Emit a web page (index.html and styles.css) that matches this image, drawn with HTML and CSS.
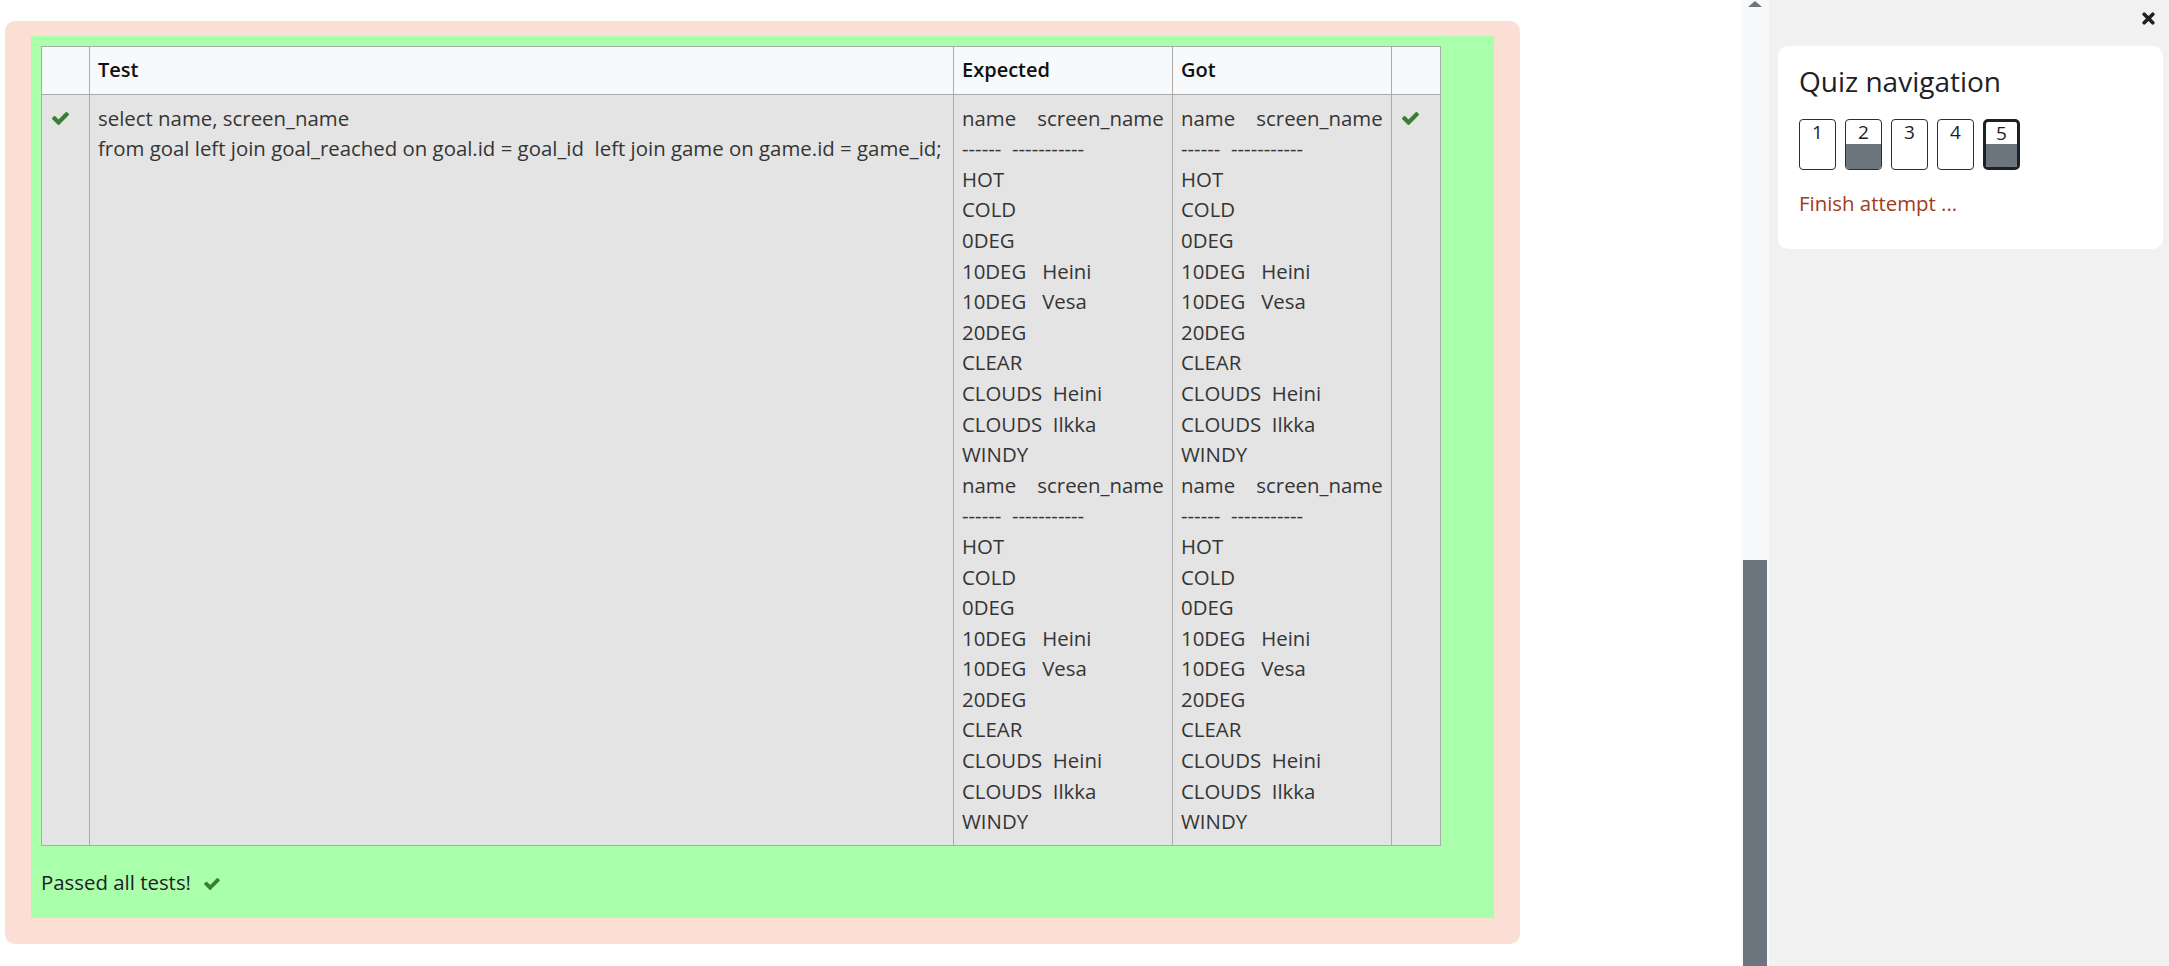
FILE: index.html
```html
<!DOCTYPE html>
<html lang="en">
<head>
<meta charset="utf-8">
<title>Quiz</title>
<link rel="stylesheet" href="styles.css">
</head>
<body>
<div class="page">
  <main class="main">
    <div class="que">
      <div class="results">
        <table class="tests">
          <colgroup>
            <col class="c-mark"><col class="c-test"><col class="c-exp"><col class="c-got"><col class="c-mark2">
          </colgroup>
          <thead>
            <tr><th></th><th>Test</th><th>Expected</th><th>Got</th><th></th></tr>
          </thead>
          <tbody>
            <tr>
              <td class="mark"><svg class="tick" viewBox="121 334 1550 1188" width="17" height="13" aria-hidden="true"><path d="M1671 566q0 40-28 68l-724 724-136 136q-28 28-68 28t-68-28l-136-136-362-362q-28-28-28-68t28-68l136-136q28-28 68-28t68 28l294 295 656-657q28-28 68-28t68 28l136 136q28 28 28 68z"/></svg></td>
              <td class="pre">select name, screen_name
from goal left join goal_reached on goal.id = goal_id  left join game on game.id = game_id;</td>
              <td class="pre">name    screen_name
------  -----------
HOT
COLD
0DEG
10DEG   Heini
10DEG   Vesa
20DEG
CLEAR
CLOUDS  Heini
CLOUDS  Ilkka
WINDY
name    screen_name
------  -----------
HOT
COLD
0DEG
10DEG   Heini
10DEG   Vesa
20DEG
CLEAR
CLOUDS  Heini
CLOUDS  Ilkka
WINDY</td>
              <td class="pre">name    screen_name
------  -----------
HOT
COLD
0DEG
10DEG   Heini
10DEG   Vesa
20DEG
CLEAR
CLOUDS  Heini
CLOUDS  Ilkka
WINDY
name    screen_name
------  -----------
HOT
COLD
0DEG
10DEG   Heini
10DEG   Vesa
20DEG
CLEAR
CLOUDS  Heini
CLOUDS  Ilkka
WINDY</td>
              <td class="mark"><svg class="tick" viewBox="121 334 1550 1188" width="17" height="13" aria-hidden="true"><path d="M1671 566q0 40-28 68l-724 724-136 136q-28 28-68 28t-68-28l-136-136-362-362q-28-28-28-68t28-68l136-136q28-28 68-28t68 28l294 295 656-657q28-28 68-28t68 28l136 136q28 28 28 68z"/></svg></td>
            </tr>
          </tbody>
        </table>
        <p class="passed">Passed all tests! <svg class="tick small" viewBox="121 334 1550 1188" width="16" height="12" aria-hidden="true"><path d="M1671 566q0 40-28 68l-724 724-136 136q-28 28-68 28t-68-28l-136-136-362-362q-28-28-28-68t28-68l136-136q28-28 68-28t68 28l294 295 656-657q28-28 68-28t68 28l136 136q28 28 28 68z"/></svg></p>
      </div>
    </div>
  </main>

  <div class="scroll">
    <span class="arrow"></span>
    <span class="thumb"></span>
  </div>

  <aside class="drawer">
    <div class="drawer-head">
      <svg class="close" viewBox="0 0 13 13" width="13" height="13" aria-hidden="true"><path d="M2.2 2.2 L10.8 10.8 M10.8 2.2 L2.2 10.8"/></svg>
    </div>
    <section class="card">
      <h3 class="card-title">Quiz navigation</h3>
      <div class="qnbuttons">
        <span class="qnbutton"><span class="num">1</span><span class="fill"></span></span>
        <span class="qnbutton answered"><span class="num">2</span><span class="fill"></span></span>
        <span class="qnbutton"><span class="num">3</span><span class="fill"></span></span>
        <span class="qnbutton"><span class="num">4</span><span class="fill"></span></span>
        <span class="qnbutton answered current"><span class="num">5</span><span class="fill"></span></span>
      </div>
      <div class="finish">Finish attempt ...</div>
    </section>
  </aside>
</div>
</body>
</html>
```

FILE: styles.css
```css
html, body {
  margin: 0;
  padding: 0;
}

body {
  font-family: "Open Sans", "Noto Sans", sans-serif;
  font-size: 20.4px;
  color: #333;
  background: #fff;
  overflow: hidden;
}

.page {
  display: flex;
  height: 966px;
}

.main {
  flex: 1;
  min-width: 0;
  background: #fff;
}

.que {
  margin: 21px 0 0 5px;
  width: 1515px;
  box-sizing: border-box;
  padding: 15px 26px 26px 26px;
  background: #fbded4;
  border-radius: 10px;
}

.results {
  background: #aaffaa;
  padding: 10px;
}

.tests {
  border-collapse: collapse;
  table-layout: fixed;
  width: 1399px;
  line-height: 30.6px;
}

.c-mark { width: 48px; }
.c-test { width: 864px; }
.c-exp { width: 219px; }
.c-got { width: 219px; }
.c-mark2 { width: 49px; }

.tests th,
.tests td {
  border: 1px solid #ababab;
  padding: 8px;
  text-align: left;
  vertical-align: top;
}

.tests th {
  background: #f8f9fa;
  color: #111;
  font-weight: 600;
  font-size: 20px;
}

.tests td {
  background: #e4e4e4;
  color: #353535;
}

.tests td.pre {
  white-space: pre;
  overflow: hidden;
}

.tests td.mark {
  padding-left: 10px;
}

.tick {
  fill: #3a7d34;
  vertical-align: 1px;
}

.tick.small {
  vertical-align: 0;
  margin-left: 8px;
}

.passed {
  margin: 20.7px 0 10.7px;
  line-height: 30.6px;
  color: #1d2125;
}

.scroll {
  flex: 0 0 28px;
  background: #f8f9fa;
  display: flex;
  flex-direction: column;
  align-items: center;
}

.arrow {
  display: block;
  width: 0;
  height: 0;
  margin-top: 1px;
  border-left: 7px solid transparent;
  border-right: 7px solid transparent;
  border-bottom: 6px solid #6c757d;
}

.thumb {
  display: block;
  margin-top: auto;
  width: 24px;
  height: 406px;
  background: #6c757d;
}

.drawer {
  flex: 0 0 400px;
  background: #f1f1f1;
}

.drawer-head {
  height: 46px;
  box-sizing: border-box;
  display: flex;
  justify-content: flex-end;
  align-items: flex-start;
  padding: 12px 14px 0 0;
}

.close {
  stroke: #1d2125;
  stroke-width: 3.6;
  stroke-linecap: round;
  fill: none;
}

.card {
  margin: 0 6px 0 9px;
  background: #fff;
  border-radius: 10px;
  padding: 19px 21px 31px;
}

.card-title {
  margin: 0 0 22px;
  font-size: 28px;
  line-height: 1.16;
  font-weight: 500;
  color: #1d2125;
}

.qnbuttons {
  display: flex;
  gap: 9px;
}

.qnbutton {
  width: 37px;
  height: 51px;
  box-sizing: border-box;
  border: 1px solid #2a2f33;
  border-radius: 4px;
  display: flex;
  flex-direction: column;
  overflow: hidden;
  background: #fff;
  color: #1d2125;
  font-size: 19px;
}

.qnbutton .num {
  height: 23.7px;
  display: flex;
  align-items: center;
  justify-content: center;
  line-height: 1;
}

.qnbutton .fill {
  flex: 1;
}

.qnbutton.answered .fill {
  background: #6c757d;
}

.qnbutton.current {
  border: 3px solid #1d2125;
  border-radius: 5px;
}

.qnbutton.current .num {
  height: 21.7px;
}

.finish {
  margin-top: 18px;
  line-height: 30px;
  color: #a03c16;
}
```
